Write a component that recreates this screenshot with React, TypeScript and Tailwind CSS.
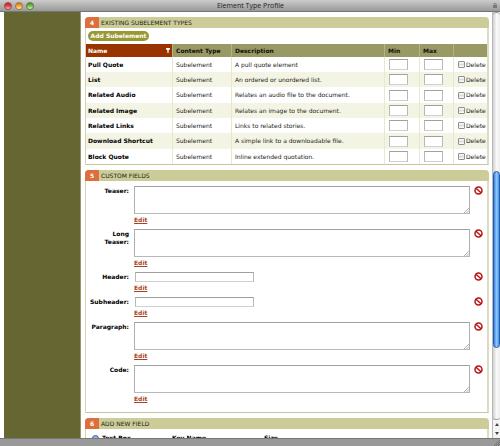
import React from 'react';

const subelements = [
  { name: 'Pull Quote', description: 'A pull quote element' },
  { name: 'List', description: 'An ordered or unordered list.' },
  { name: 'Related Audio', description: 'Relates an audio file to the document.' },
  { name: 'Related Image', description: 'Relates an image to the document.' },
  { name: 'Related Links', description: 'Links to related stories.' },
  { name: 'Download Shortcut', description: 'A simple link to a downloadable file.' },
  { name: 'Block Quote', description: 'Inline extended quotation.' },
];

const fields = [
  { label: 'Teaser:', multiline: true },
  { label: 'Long Teaser:', multiline: true },
  { label: 'Header:', multiline: false },
  { label: 'Subheader:', multiline: false },
  { label: 'Paragraph:', multiline: true },
  { label: 'Code:', multiline: true },
];

const boxInput =
  'block border border-t-[#a0a0a0] border-x-[#b8b8b8] border-b-[#d0d0d0] bg-white px-px outline-none';

function Section({ step, title, last, children }: {
  step: number;
  title: string;
  last?: boolean;
  children: React.ReactNode;
}) {
  return (
    <section className={last ? 'shrink-0' : 'mb-[5px] shrink-0'}>
      <header className="flex h-[11px] items-center overflow-hidden rounded-t-[4px] bg-[#cccc99]">
        <span className="flex h-full w-[14px] items-center justify-center bg-[#dd6f3c] text-[6px] font-bold text-white">
          {step}
        </span>
        <h2 className="pl-[2px] text-[6px] leading-[11px] text-[#222211]">
          {title}
        </h2>
      </header>
      <div className="border-r-2 border-b border-l border-r-[#dcdcc4] border-b-[#c4c6a0] border-l-[#d4d4b8]">
        {children}
      </div>
    </section>
  );
}

function SubelementTable() {
  const head = 'border-r border-[#b4b482] pl-[3px] text-left font-bold';
  const cell = 'border-r border-[#e8e8cc] pl-[3px]';
  return (
    <table className="w-full table-fixed border-separate border-spacing-0 text-[6px] leading-[8px]">
      <colgroup>
        <col className="w-[87px]" />
        <col className="w-[59px]" />
        <col />
        <col className="w-[35px]" />
        <col className="w-[34px]" />
        <col className="w-[33px]" />
      </colgroup>
      <thead>
        <tr className="h-[13px] bg-[#999966] text-[#111108]">
          <th className="border-r border-[#b4b482] bg-[#993300] pl-[2px] text-left font-bold text-white">
            <span className="flex items-center justify-between pr-[2px]">
              Name
              <svg className="h-[5px] w-[4px]" viewBox="0 0 4 5" fill="white">
                <path d="M0 0h4v1L2.6 2.6V5H1.4V2.6L0 1z" />
              </svg>
            </span>
          </th>
          <th className={head}>Content Type</th>
          <th className={head}>Description</th>
          <th className={head}>Min</th>
          <th className={head}>Max</th>
          <th aria-label="Delete" />
        </tr>
      </thead>
      <tbody>
        {subelements.map((row) => (
          <tr
            key={row.name}
            className="h-[15px] bg-white text-[#222222] even:bg-[#f4f4e4] nth-[3n]:h-[16px]"
          >
            <th className="border-r border-[#e8e8cc] pl-[2px] text-left font-bold text-black">{row.name}</th>
            <td className={cell}>Subelement</td>
            <td className={cell}>{row.description}</td>
            <td className={cell}>
              <input aria-label={`${row.name} min`} className={`${boxInput} ml-px h-[11px] w-[19px]`} />
            </td>
            <td className={cell}>
              <input aria-label={`${row.name} max`} className={`${boxInput} ml-px h-[11px] w-[19px]`} />
            </td>
            <td className="pl-[4px]">
              <label className="flex items-center gap-px whitespace-nowrap">
                <input
                  type="checkbox"
                  className="h-[7px] w-[7px] shrink-0 appearance-none rounded-[1px] border border-[#909090] bg-gradient-to-b from-white via-[#dddddd] to-white"
                />
                Delete
              </label>
            </td>
          </tr>
        ))}
      </tbody>
    </table>
  );
}

function FieldRow({ label, multiline }: { label: string; multiline: boolean }) {
  const id = label.replace(/\W/g, '').toLowerCase();
  return (
    <div className={`flex items-start ${multiline ? 'h-[43px]' : 'h-[25px]'}`}>
      <label htmlFor={id} className="w-[43px] shrink-0 pt-px pl-[2px] text-right leading-[8px] font-bold text-black">
        {label}
      </label>
      <div className="ml-[5px] min-w-0 grow">
        {multiline ? (
          <div className="relative">
            <textarea
              id={id}
              className="block h-[28px] w-full resize-none border border-t-[#a0a0a0] border-x-[#b0b0b0] border-b-[#b8b8b8] bg-white outline-none"
            />
            <svg className="absolute right-px bottom-px h-[5px] w-[5px]" viewBox="0 0 5 5" stroke="#888888" strokeWidth="0.7">
              <path d="M0 5 5 0M2.5 5 5 2.5" />
            </svg>
          </div>
        ) : (
          <input id={id} className={`${boxInput} ml-px h-[10px] w-[119px]`} />
        )}
        <a href="#edit" className="block w-fit leading-[11px] font-bold text-[#aa4422] underline">
          Edit
        </a>
      </div>
      <div className="w-[17px] shrink-0 pl-[4px]">
        <button type="button" aria-label={`Delete ${label}`} className="block">
          <svg className="h-[9px] w-[9px]" viewBox="0 0 9 9" fill="white" stroke="#bb1111" strokeWidth="1.5">
            <circle cx="4.5" cy="4.5" r="3.5" />
            <path d="M2 2.2 7 6.8" />
          </svg>
        </button>
      </div>
    </div>
  );
}

function TrafficLight({ tone }: { tone: 'red' | 'amber' | 'green' }) {
  const tones = {
    red: 'from-[#b03030] via-[#e83838] to-[#ffb8b0] border-[#a04444]',
    amber: 'from-[#c07828] via-[#f4a838] to-[#fff4b0] border-[#a87038]',
    green: 'from-[#4c8c30] via-[#78c048] to-[#d8fcb0] border-[#587c44]',
  };
  return (
    <button
      type="button"
      aria-label={tone}
      className={`h-[8px] w-[8px] rounded-full border bg-gradient-to-b ${tones[tone]}`}
    />
  );
}

function Scrollbar() {
  return (
    <div className="flex w-[8px] shrink-0 flex-col border-l border-[#b8b8b8] bg-gradient-to-r from-[#d0d0d0] via-[#f8f8f8] to-[#eeeeee]">
      <div className="h-[5px] rounded-t-full border-t border-[#999999]" />
      <div className="grow-[154]" />
      <div className="grow-[176] rounded-[4px] border border-[#2458b0] bg-gradient-to-r from-[#3c80dc] via-[#8cc8fc] to-[#4c98ec]" />
      <div className="grow-[71] rounded-b-full border-b border-[#999999]" />
      <div className="flex h-[18px] flex-col items-center justify-around bg-[#f4f4f4]">
        <svg className="h-[3px] w-[4px]" viewBox="0 0 4 3" fill="#444444"><path d="M2 0 4 3H0z" /></svg>
        <svg className="h-[3px] w-[4px]" viewBox="0 0 4 3" fill="#444444"><path d="M0 0h4L2 3z" /></svg>
      </div>
    </div>
  );
}

export default function App() {
  return (
    <div className="flex h-screen flex-col overflow-hidden bg-white font-['DejaVu_Sans',Verdana,sans-serif] text-[6px] leading-[8px]">
      <div className="flex h-[12px] shrink-0 items-center border-b border-[#777777] bg-gradient-to-b from-[#cccccc] to-[#999999] pr-[3px] pl-[4px]">
        <div className="flex w-[30px] gap-[3px]">
          <TrafficLight tone="red" />
          <TrafficLight tone="amber" />
          <TrafficLight tone="green" />
        </div>
        <h1 className="grow text-center font-['Open_Sans','Noto_Sans',sans-serif] text-[7px] leading-[11px] text-[#222222]">
          Element Type Profile
        </h1>
        <div className="flex w-[30px] justify-end">
          <svg className="h-[5px] w-[4px]" viewBox="0 0 4 5" fill="#777777">
            <path d="M0 2h4v3H0z" />
            <path d="M1 2V.5h2V2" fill="none" stroke="#777777" strokeWidth="0.7" />
          </svg>
        </div>
      </div>

      <div className="flex min-h-0 grow">
        <aside className="ml-[4px] w-[77px] shrink-0 border-r border-[#99946c] bg-[#666633]" />
        <main className="flex min-w-0 grow flex-col overflow-hidden pt-[5px] pr-[3px] pl-[4px]">
          <Section step={4} title="EXISTING SUBELEMENT TYPES">
            <div className="h-[16px] pt-[3px] pl-[2px]">
              <button type="button" className="block h-[10px] w-[61px] rounded-full bg-[#999933] text-center leading-[10px] font-bold text-white">
                Add Subelement
              </button>
            </div>
            <SubelementTable />
          </Section>

          <Section step={5} title="CUSTOM FIELDS">
            <div className="pt-[5px] pb-[4px]">
              {fields.map((field) => (
                <FieldRow key={field.label} label={field.label} multiline={field.multiline} />
              ))}
            </div>
          </Section>

          <Section step={6} title="ADD NEW FIELD" last>
            <div className="flex pt-[5px] pl-[6px] font-bold text-black">
              <label className="flex w-[80px] items-center gap-[3px]">
                <input
                  type="radio"
                  defaultChecked
                  className="h-[7px] w-[7px] appearance-none rounded-full border border-[#3858a0] bg-[#90b8f0]"
                />
                Text Box
              </label>
              <span className="w-[92px]">Key Name</span>
              <span>Size</span>
            </div>
          </Section>
        </main>
        <Scrollbar />
      </div>

      <footer className="flex h-[8px] shrink-0 items-end justify-end border-t border-[#777777] bg-[#999999]">
        <svg className="h-[6px] w-[6px]" viewBox="0 0 6 6" stroke="#666666" strokeWidth="0.7">
          <path d="M0 6 6 0M2 6 6 2M4 6 6 4" />
        </svg>
      </footer>
    </div>
  );
}
